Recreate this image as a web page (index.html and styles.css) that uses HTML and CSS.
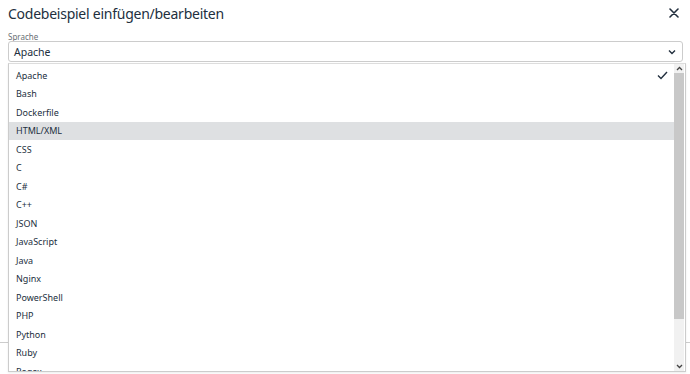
FILE: index.html
```html
<!DOCTYPE html>
<html lang="de">
<head>
<meta charset="utf-8">
<link rel="stylesheet" href="styles.css">
</head>
<body>
<div class="dialog">
  <div class="header">
    <div class="title">Codebeispiel einfügen/bearbeiten</div>
    <div class="close">
      <svg width="10" height="10" viewBox="0 0 10 10"><path d="M1 1L9 9M9 1L1 9" stroke="#222f3e" stroke-width="1.6" stroke-linecap="round"/></svg>
    </div>
  </div>
  <div class="body">
    <div class="label">Sprache</div>
    <div class="selectwrap">
      <div class="select">
        <span class="value">Apache</span>
        <svg class="chev" width="8" height="6" viewBox="0 0 8 6"><path d="M1 1.5L4 4.5L7 1.5" fill="none" stroke="#222f3e" stroke-width="1.4"/></svg>
      </div>
      <div class="dropdown">
        <div class="list">
          <div class="item">Apache<svg class="check" width="11" height="9" viewBox="0 0 11 9"><path d="M1 4.5L4 7.5L10 1" fill="none" stroke="#222f3e" stroke-width="1.4"/></svg></div>
          <div class="item">Bash</div>
          <div class="item">Dockerfile</div>
          <div class="item hover">HTML/XML</div>
          <div class="item">CSS</div>
          <div class="item">C</div>
          <div class="item">C#</div>
          <div class="item">C++</div>
          <div class="item">JSON</div>
          <div class="item">JavaScript</div>
          <div class="item">Java</div>
          <div class="item">Nginx</div>
          <div class="item">PowerShell</div>
          <div class="item">PHP</div>
          <div class="item">Python</div>
          <div class="item">Ruby</div>
          <div class="item">Regex</div>
        </div>
        <div class="scrollbar">
          <div class="arrow up"><svg width="7" height="5" viewBox="0 0 7 5"><path d="M1 4L3.5 1.5L6 4" fill="none" stroke="#444" stroke-width="1.3"/></svg></div>
          <div class="track"><div class="thumb"></div></div>
          <div class="arrow down"><svg width="7" height="5" viewBox="0 0 7 5"><path d="M1 1L3.5 3.5L6 1" fill="none" stroke="#444" stroke-width="1.3"/></svg></div>
        </div>
      </div>
    </div>
  </div>
  <div class="footer"></div>
</div>
</body>
</html>
```

FILE: styles.css
```css
html, body {
  margin: 0;
  padding: 0;
  background: #fff;
}
body {
  font-family: "Noto Sans", "Open Sans", "DejaVu Sans", sans-serif;
  color: #222f3e;
  width: 690px;
  height: 374px;
  overflow: hidden;
}
.dialog {
  display: flex;
  flex-direction: column;
  height: 374px;
}
.header {
  height: 26px;
  display: flex;
  align-items: center;
  justify-content: space-between;
  padding: 0 11px 0 8px;
}
.title {
  font-size: 14px;
  letter-spacing: -0.25px;
}
.close {
  display: flex;
  align-items: center;
}
.body {
  padding: 6px 7px 0 8px;
  flex: 1;
}
.label {
  font-size: 8px;
  line-height: 9px;
  color: #6a6f75;
}
.selectwrap {
  position: relative;
}
.select {
  height: 19px;
  border: 1px solid #ccc;
  border-radius: 3px;
  display: flex;
  align-items: center;
  justify-content: space-between;
  padding: 0 6px 0 5px;
  font-size: 10.5px;
}
.chev {
  margin-top: 1px;
}
.dropdown {
  position: absolute;
  top: 22px;
  left: 0;
  right: -3px;
  height: 307px;
  border: 1px solid #ccc;
  border-top-color: #ddd;
  background: #fff;
  display: flex;
  overflow: hidden;
  z-index: 2;
  box-shadow: 0 1px 2px rgba(0,0,0,0.08);
}
.list {
  flex: 1;
  padding-top: 2px;
}
.item {
  height: 18.5px;
  display: flex;
  align-items: center;
  justify-content: space-between;
  padding: 0 6px 0 7px;
  font-size: 9px;
}
.item.hover {
  background: #dee0e2;
}
.scrollbar {
  width: 10px;
  display: flex;
  flex-direction: column;
  background: #f1f1f1;
  margin-right: 1px;
}
.arrow {
  height: 9px;
  display: flex;
  align-items: center;
  justify-content: center;
}
.track {
  flex: 1;
}
.thumb {
  height: 246px;
  background: #c8c8c8;
}
.footer {
  height: 31px;
  border-top: 1px solid #ccc;
}
```
